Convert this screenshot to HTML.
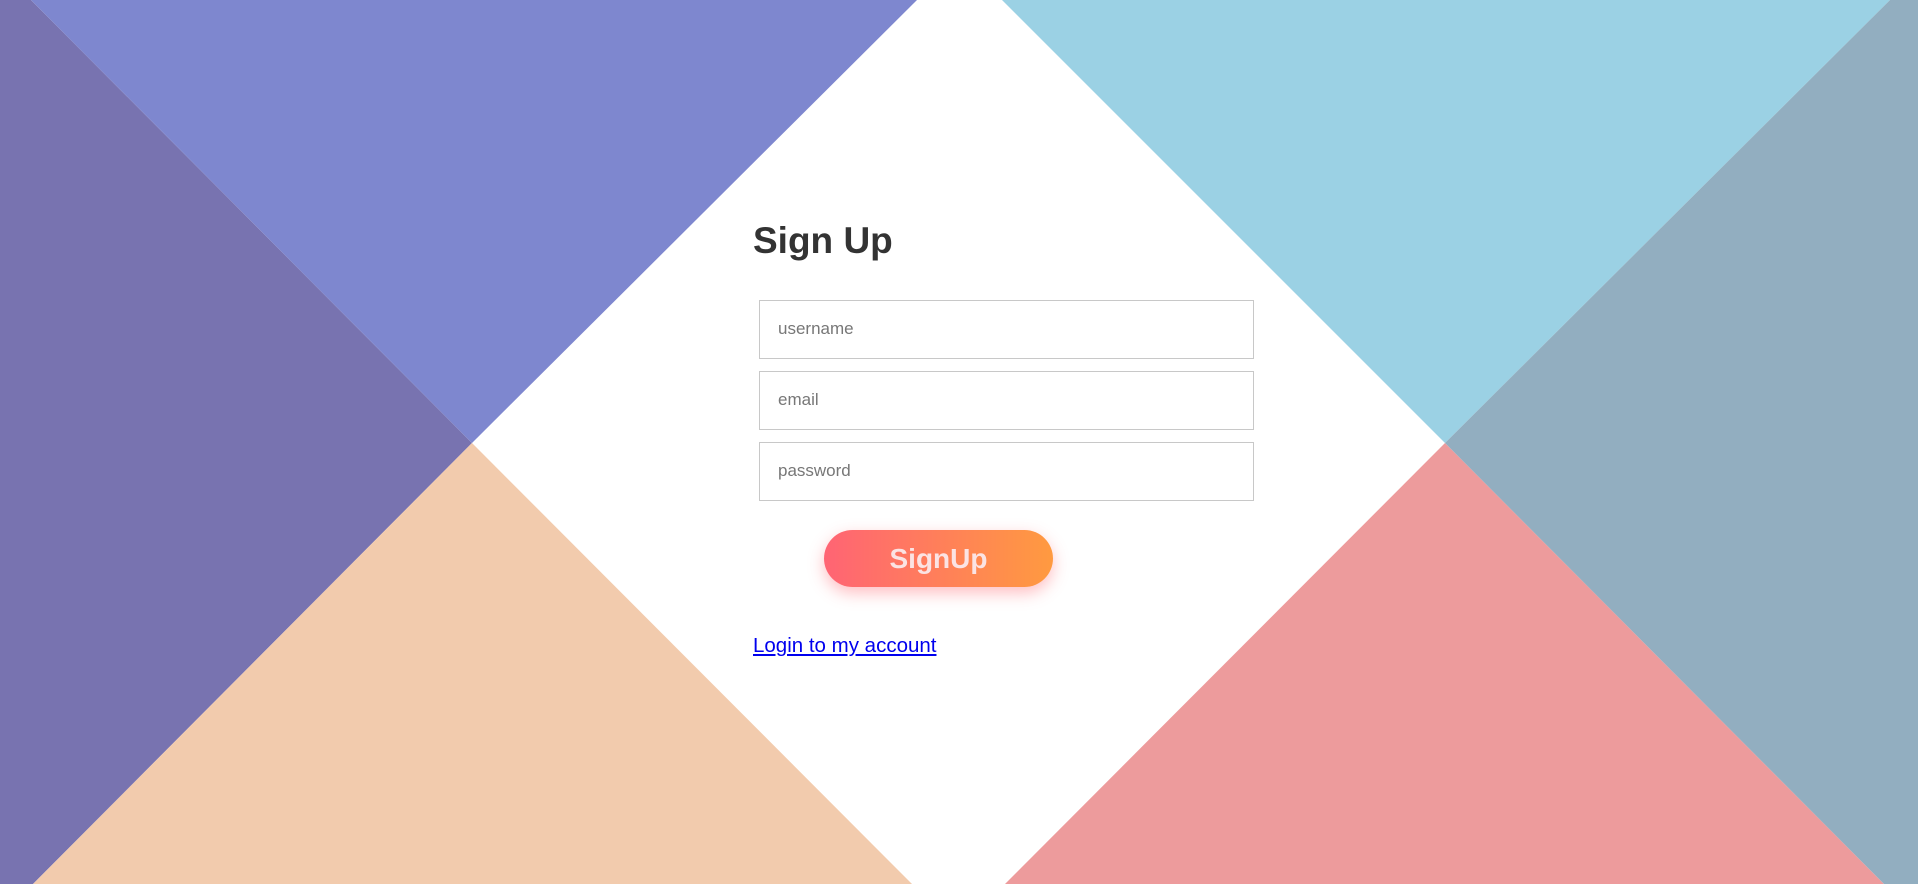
<!DOCTYPE html>
<html><head><meta charset="utf-8"><style>
html,body{margin:0;padding:0;width:1918px;height:884px;overflow:hidden;background:#fff;font-family:"Liberation Sans",sans-serif;}
svg.bg{position:absolute;left:0;top:0}
h1{position:absolute;left:753px;top:216px;margin:0;font-size:37px;font-weight:bold;color:#333;line-height:50px;}
.inp{position:absolute;left:759px;width:493px;height:57px;border:1px solid #c8c8c8;background:#fff;box-sizing:content-box;}
.inp span{position:absolute;left:18px;top:18px;font-size:17px;color:#777;}
.btn{position:absolute;left:824px;top:530px;width:229px;height:57px;border-radius:29px;background:linear-gradient(90deg,#ff6474,#ff9a40);box-shadow:0 6px 16px rgba(255,110,120,.45);color:#fbe3e3;font-weight:bold;font-size:28px;text-align:center;line-height:57px;}
a{position:absolute;left:753px;top:634px;font-size:20.5px;color:#0000ee;text-decoration:underline;}
</style></head><body>
<svg class="bg" width="1918" height="884" viewBox="0 0 1918 884">
<polygon points="0,0 31,0 472,443 33,884 0,884" fill="#7873b0"/>
<polygon points="31,0 917,0 472,443" fill="#7e87cf"/>
<polygon points="33,884 912,884 472,443" fill="#f2cbad"/>
<polygon points="1002,0 1890,0 1445,443" fill="#9bd1e4"/>
<polygon points="1005,884 1884,884 1445,443" fill="#ed9b9c"/>
<polygon points="1890,0 1918,0 1918,884 1884,884 1445,443" fill="#92aec0"/>
</svg>
<h1>Sign Up</h1>
<div class="inp" style="top:300px"><span>username</span></div>
<div class="inp" style="top:371px"><span>email</span></div>
<div class="inp" style="top:442px"><span>password</span></div>
<div class="btn">SignUp</div>
<a>Login to my account</a>
</body></html>
